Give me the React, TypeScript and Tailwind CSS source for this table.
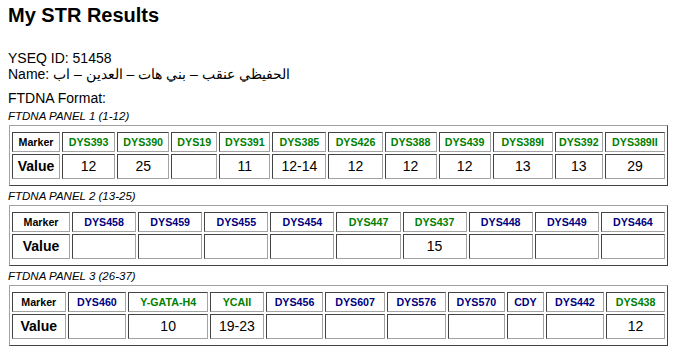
const GREEN = 'text-[#008000]'
const NAVY = 'text-[#000080]'

type Marker = { name: string; green?: boolean; value?: string; w?: number }

type Panel = { title: string; markerW: number; markers: Marker[] }

const panels: Panel[] = [
  {
    title: 'FTDNA PANEL 1 (1-12)',
    markerW: 48,
    markers: [
      { name: 'DYS393', green: true, value: '12', w: 53 },
      { name: 'DYS390', green: true, value: '25', w: 52 },
      { name: 'DYS19', green: true, w: 46 },
      { name: 'DYS391', green: true, value: '11', w: 51 },
      { name: 'DYS385', green: true, value: '12-14', w: 54 },
      { name: 'DYS426', green: true, value: '12', w: 54 },
      { name: 'DYS388', green: true, value: '12', w: 52 },
      { name: 'DYS439', green: true, value: '12', w: 52 },
      { name: 'DYS389I', green: true, value: '13', w: 60 },
      { name: 'DYS392', green: true, value: '13', w: 48 },
      { name: 'DYS389II', green: true, value: '29', w: 60 },
    ],
  },
  {
    title: 'FTDNA PANEL 2 (13-25)',
    markerW: 58,
    markers: [
      { name: 'DYS458', w: 64 },
      { name: 'DYS459', w: 64 },
      { name: 'DYS455', w: 64 },
      { name: 'DYS454', w: 64 },
      { name: 'DYS447', green: true, w: 64 },
      { name: 'DYS437', green: true, value: '15', w: 64 },
      { name: 'DYS448', w: 64 },
      { name: 'DYS449', w: 64 },
      { name: 'DYS464', w: 64 },
    ],
  },
  {
    title: 'FTDNA PANEL 3 (26-37)',
    markerW: 53,
    markers: [
      { name: 'DYS460', w: 58 },
      { name: 'Y-GATA-H4', green: true, value: '10', w: 79 },
      { name: 'YCAII', green: true, value: '19-23', w: 53 },
      { name: 'DYS456', w: 57 },
      { name: 'DYS607', w: 59 },
      { name: 'DYS576', w: 58 },
      { name: 'DYS570', w: 57 },
      { name: 'CDY', w: 36 },
      { name: 'DYS442', w: 58 },
      { name: 'DYS438', green: true, value: '12', w: 58 },
    ],
  },
]

// inset look of an old-school border="1" table cell
const cell =
  'border border-t-[#444] border-l-[#444] border-b-[#a3a3a3] border-r-[#a3a3a3] p-0 text-center align-middle'

function PanelTable({ panel }: { panel: Panel }) {
  return (
    <div className="ml-px w-[659px] border border-t-[#a3a3a3] border-l-[#a3a3a3] border-b-[#444] border-r-[#444] py-[4px]">
      <table className="w-full table-fixed border-separate border-spacing-[2px]">
        <tbody>
          <tr>
            <th className={`${cell} h-[20px] text-[10.67px] font-bold`} style={{ width: panel.markerW }}>
              Marker
            </th>
            {panel.markers.map((m) => (
              <th
                key={m.name}
                className={`${cell} h-[20px] text-[10.67px] font-bold ${m.green ? GREEN : NAVY}`}
                style={{ width: m.w }}
              >
                {m.name}
              </th>
            ))}
          </tr>
          <tr>
            <td className={`${cell} h-[25px] text-[14px] font-bold`}>Value</td>
            {panel.markers.map((m) => (
              <td key={m.name} className={`${cell} h-[25px] text-[14px]`}>
                {m.value ?? ''}
              </td>
            ))}
          </tr>
        </tbody>
      </table>
    </div>
  )
}

export default function App() {
  return (
    <div className="min-h-[355px] bg-white px-2 font-['Liberation_Sans',Arial,sans-serif] text-black">
      <h1 className="pt-[4px] text-[20px] font-bold leading-[23px]">My STR Results</h1>

      <div className="mt-[23px] text-[14px] leading-[16px]">
        <div>YSEQ ID: 51458</div>
        <div>Name: الحفيظي عنقب – بني هات – العدين – اب</div>
      </div>

      <div className="mt-[8px] text-[14px] leading-[16px]">FTDNA Format:</div>

      {panels.map((panel) => (
        <div key={panel.title}>
          <div className="pt-[4px] pb-[2px] text-[11.5px] italic leading-[13px]">{panel.title}</div>
          <PanelTable panel={panel} />
        </div>
      ))}
    </div>
  )
}
